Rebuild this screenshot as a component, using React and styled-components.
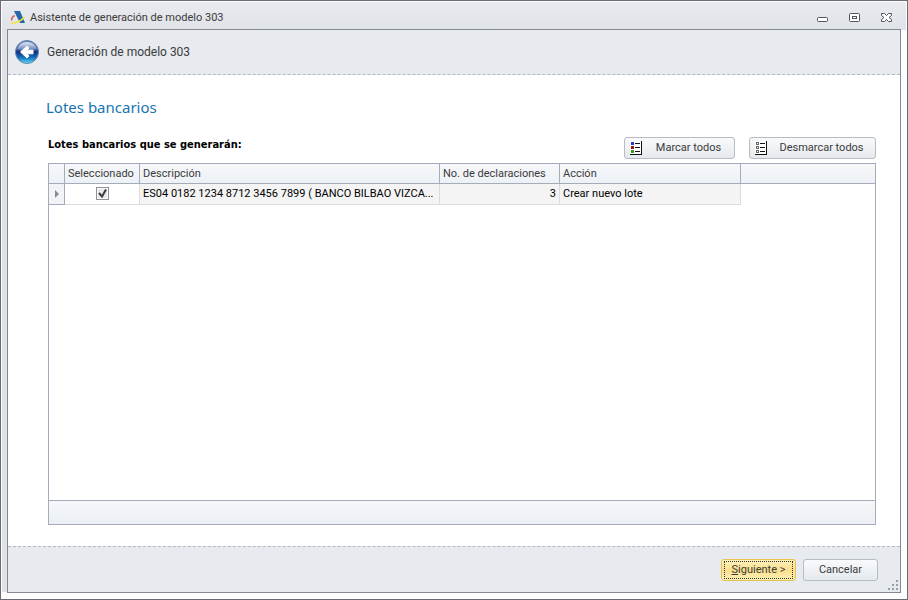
import React, { useState } from 'react';
import styled, { createGlobalStyle } from 'styled-components';

const GlobalStyle = createGlobalStyle`
  *, *::before, *::after { box-sizing: border-box; }
  body {
    margin: 0;
    font: 11px/14px Roboto, "Noto Sans", sans-serif;
    color: #3b3b3b;
  }
  button, input { font: inherit; color: inherit; }
`;

const Window = styled.div`
  min-height: 100vh;
  display: flex;
  flex-direction: column;
  padding: 1px 6px 6px 1px;
  border: 1px solid #696c77;
  background:
    linear-gradient(#e9ebef, #dfe2e6) 1px 1px / calc(100% - 2px) 28px no-repeat,
    linear-gradient(#dfe2e6, #dfe2e6) 1px 29px / 5px calc(100% - 36px) no-repeat,
    #fdfdfd;
`;

const TitleBar = styled.header`
  display: flex;
  align-items: center;
  height: 27px;
  padding: 4px 8px 0 8px;
`;

const Title = styled.h1`
  flex: 1;
  margin: 0 0 0 4px;
  font-size: 11px;
  font-weight: 400;
`;

const Controls = styled.div`
  display: flex;
  gap: 19px;
`;

const ControlButton = styled.button`
  display: grid;
  place-items: center;
  width: 13px;
  height: 13px;
  padding: 0;
  border: 0;
  background: none;
`;

const Client = styled.main`
  flex: 1;
  display: flex;
  flex-direction: column;
  margin-left: 5px;
  border: 1px solid #858990;
  background: #fff;
`;

const StepBar = styled.div`
  display: flex;
  align-items: center;
  gap: 7px;
  height: 45px;
  padding: 0 6px;
  border-bottom: 1px dashed #b4b7c6;
  background: #e7eaef;
`;

const BackButton = styled.button`
  display: flex;
  padding: 0;
  border: 0;
  background: none;
`;

const StepTitle = styled.span`
  font-size: 12px;
`;

const Content = styled.section`
  flex: 1;
  display: flex;
  flex-direction: column;
  padding: 22px 24px 21px 40px;
`;

const Heading = styled.h2`
  margin: 0 0 0 -2px;
  font-family: "Noto Sans", sans-serif;
  font-size: 15px;
  line-height: 20px;
  font-weight: 400;
  color: #1674b1;
`;

const Toolbar = styled.div`
  display: flex;
  gap: 14px;
  height: 46px;
  padding-top: 20px;
`;

const Caption = styled.h3`
  flex: 1;
  margin: 0;
  font-family: "DejaVu Sans Condensed", sans-serif;
  font-size: 11px;
  line-height: 16px;
  font-weight: 700;
  color: #000;
`;

const Button = styled.button`
  display: flex;
  align-items: center;
  justify-content: center;
  width: ${(p) => p.$width}px;
  height: 22px;
  padding: 0 1px;
  border: 1px solid ${(p) => (p.$primary ? '#e9c34c' : '#b7bbc3')};
  border-radius: 3px;
  background: ${(p) =>
    p.$primary
      ? 'linear-gradient(#fdf1bd, #fbe08c 50%, #fcefb4)'
      : 'linear-gradient(#f8fafc, #eff2f5 50%, #e5e9ed)'};
  line-height: 16px;
`;

const FocusMark = styled.span`
  flex: 1;
  height: 18px;
  margin: 0 1px;
  border: 1px dotted #333;
`;

const ButtonIcon = styled.svg`
  flex: none;
  margin-left: 4px;
`;

const ButtonText = styled.span`
  flex: 1;
`;

const GridPanel = styled.div`
  flex: 1;
  display: flex;
  flex-direction: column;
  border: 1px solid #a4abb9;
`;

const Table = styled.table`
  width: 100%;
  table-layout: fixed;
  border-collapse: separate;
  border-spacing: 0;
`;

const Col = styled.col`
  width: ${(p) => (p.$width ? `${p.$width}px` : 'auto')};
`;

const HeadCell = styled.th`
  height: 20px;
  padding: 0 3px;
  border: solid #a4abb9;
  border-width: 0 1px 1px 0;
  background: linear-gradient(#f6f7fa, #edf1f5);
  font-weight: 400;
  text-align: left;
  white-space: nowrap;
  &:last-child { border-right: 0; }
`;

const Cell = styled.td`
  height: 21px;
  padding: 0 3px;
  border: solid #dcdcde;
  border-width: 0 1px 1px 0;
  background: ${(p) => (p.$plain ? '#fff' : '#f4f4f4')};
  color: #000;
  text-align: ${(p) => p.$align || 'left'};
  white-space: nowrap;
`;

const IndicatorCell = styled(Cell)`
  padding: 0 5px;
  border-color: #a4abb9;
  background: #f1f3f6;
`;

const EmptyCell = styled.td``;

const CheckLabel = styled.label`
  display: grid;
  justify-content: center;
  padding-bottom: 1px;
  > * { grid-area: 1 / 1; }
`;

const CheckInput = styled.input`
  appearance: none;
  width: 13px;
  height: 13px;
  margin: 0;
  border: 1px solid #8d9098;
  background: #e6e8eb;
  box-shadow: inset 0 0 0 1px #fafafa;
  & + svg { visibility: hidden; pointer-events: none; }
  &:checked + svg { visibility: visible; }
`;

const Glyph = styled.svg`
  display: block;
`;

const GridFooter = styled.div`
  height: 24px;
  margin-top: auto;
  border-top: 1px solid #a4abb9;
  background: linear-gradient(#f5f7fa, #ebeff3);
`;

const ActionBar = styled.footer`
  display: flex;
  align-items: flex-end;
  justify-content: flex-end;
  gap: 7px;
  height: 46px;
  padding-bottom: 11px;
  border-top: 1px dashed #b4b7c6;
  background: #e7eaef;
`;

const Grip = styled.svg`
  margin: 0 1px -10px 3px;
`;

function AppLogo() {
  return (
    <Glyph width="16" height="16" viewBox="0 0 16 16" aria-hidden="true">
      <path d="M4 1h6l5 12h-5z" fill="#2467a8" />
      <path d="M4.500 5.500C2.500 6.500 1.500 8 1.500 10.500" fill="none" stroke="#d4605c" strokeWidth="1.400" />
      <path d="M1 13C7 13.500 11 11 14.500 7" fill="none" stroke="#f4e53a" strokeWidth="1.600" />
    </Glyph>
  );
}

function BackIcon() {
  return (
    <Glyph width="26" height="26" viewBox="0 0 26 26" aria-hidden="true">
      <defs>
        <linearGradient id="orb" x1="0" y1="0" x2="0" y2="1">
          <stop offset="0" stopColor="#6288c4" />
          <stop offset=".4" stopColor="#36589e" />
          <stop offset=".5" stopColor="#0c2e80" />
          <stop offset=".75" stopColor="#1673c4" />
          <stop offset="1" stopColor="#62e0f8" />
        </linearGradient>
        <linearGradient id="shine" x1="0" y1="0" x2="0" y2="1">
          <stop offset="0" stopColor="#fff" stopOpacity=".8" />
          <stop offset="1" stopColor="#fff" stopOpacity=".1" />
        </linearGradient>
      </defs>
      <circle cx="13" cy="13" r="11.500" fill="url(#orb)" stroke="#6f83a8" />
      <path d="M3 10a10.500 10 0 0 1 20 0q-10 5-20 0z" fill="url(#shine)" />
      <path
        d="M6.500 13l6.500-6 2 2-2 2.200h6v3.600h-6l2 2.200-2 2z"
        fill="#fff"
        stroke="#fff"
        strokeLinejoin="round"
      />
    </Glyph>
  );
}

function ListIcon({ colors }) {
  return (
    <ButtonIcon width="14" height="14" viewBox="0 0 14 14" shapeRendering="crispEdges" aria-hidden="true">
      <path d="M0 0h11v13H0z" fill="#fff" />
      <path d="M11.500 0v14M0 13.500h12M5 2.500h5M5 6.500h5M5 10.500h5" fill="none" stroke="#111" />
      {[1, 5, 9].map((y, i) =>
        colors ? (
          <rect key={y} x="1" y={y} width="3" height="3" fill={colors[i]} />
        ) : (
          <rect key={y} x="1.500" y={y + 0.5} width="2" height="2" fill="#fff" stroke="#666" />
        )
      )}
    </ButtonIcon>
  );
}

const rows = [
  {
    description: 'ES04 0182 1234 8712 3456 7899 ( BANCO BILBAO VIZCA...',
    count: 3,
    action: 'Crear nuevo lote',
  },
];

export default function App() {
  const [checked, setChecked] = useState(rows.map(() => true));
  const markAll = (value) => setChecked(rows.map(() => value));
  const toggle = (index) => setChecked(checked.map((v, i) => (i === index ? !v : v)));

  return (
    <>
      <GlobalStyle />
      <Window>
        <TitleBar>
          <AppLogo />
          <Title>Asistente de generación de modelo 303</Title>
          <Controls>
            <ControlButton aria-label="Minimizar">
              <Glyph width="13" height="13" viewBox="0 0 13 13">
                <rect x="1.500" y="6.500" width="10" height="4" rx="1" fill="#fff" stroke="#50545c" />
              </Glyph>
            </ControlButton>
            <ControlButton aria-label="Maximizar">
              <Glyph width="13" height="13" viewBox="0 0 13 13">
                <rect x="1.500" y="2.500" width="10" height="8" rx="1" fill="#fff" stroke="#50545c" />
                <rect x="4.500" y="5.500" width="4" height="2" fill="#fff" stroke="#50545c" />
              </Glyph>
            </ControlButton>
            <ControlButton aria-label="Cerrar">
              <Glyph width="13" height="13" viewBox="0 0 13 13">
                <path
                  d="M1.500 2.500h3l2 2 2-2h3v2l-2.500 2 2.500 2v2h-3l-2-2-2 2h-3v-2l2.500-2-2.500-2z"
                  fill="#fff"
                  stroke="#50545c"
                />
              </Glyph>
            </ControlButton>
          </Controls>
        </TitleBar>

        <Client>
          <StepBar>
            <BackButton aria-label="Atrás">
              <BackIcon />
            </BackButton>
            <StepTitle>Generación de modelo 303</StepTitle>
          </StepBar>

          <Content>
            <Heading>Lotes bancarios</Heading>
            <Toolbar>
              <Caption>Lotes bancarios que se generarán:</Caption>
              <Button $width={111} onClick={() => markAll(true)}>
                <ListIcon colors={['#2b35c8', '#a01010', '#3b9a10']} />
                <ButtonText>Marcar todos</ButtonText>
              </Button>
              <Button $width={127} onClick={() => markAll(false)}>
                <ListIcon />
                <ButtonText>Desmarcar todos</ButtonText>
              </Button>
            </Toolbar>
            <GridPanel>
              <Table>
                <colgroup>
                  <Col $width={16} />
                  <Col $width={75} />
                  <Col $width={300} />
                  <Col $width={120} />
                  <Col $width={181} />
                  <Col />
                </colgroup>
                <thead>
                  <tr>
                    <HeadCell />
                    <HeadCell>Seleccionado</HeadCell>
                    <HeadCell>Descripción</HeadCell>
                    <HeadCell>No. de declaraciones</HeadCell>
                    <HeadCell>Acción</HeadCell>
                    <HeadCell />
                  </tr>
                </thead>
                <tbody>
                  {rows.map((row, i) => (
                    <tr key={row.description}>
                      <IndicatorCell>
                        <Glyph width="5" height="8" viewBox="0 0 5 8">
                          <path d="M1 0l4 4-4 4z" fill="#858b98" />
                        </Glyph>
                      </IndicatorCell>
                      <Cell $plain>
                        <CheckLabel>
                          <CheckInput
                            type="checkbox"
                            aria-label="Seleccionado"
                            checked={checked[i]}
                            onChange={() => toggle(i)}
                          />
                          <Glyph width="13" height="13" viewBox="0 0 13 13">
                            <path d="M3 6l3 3.500 4-7" fill="none" stroke="#3c3c3c" strokeWidth="2" />
                          </Glyph>
                        </CheckLabel>
                      </Cell>
                      <Cell>{row.description}</Cell>
                      <Cell $align="right">{row.count}</Cell>
                      <Cell>{row.action}</Cell>
                      <EmptyCell />
                    </tr>
                  ))}
                </tbody>
              </Table>
              <GridFooter />
            </GridPanel>
          </Content>

          <ActionBar>
            <Button $width={75} $primary>
              <FocusMark>
                <u>S</u>iguiente &gt;
              </FocusMark>
            </Button>
            <Button $width={75}>Cancelar</Button>
            <Grip width="11" height="11" viewBox="0 0 11 11" aria-hidden="true">
              <path d="M8 0h2v2h-2zM4 4h2v2h-2zM8 4h2v2h-2zM0 8h2v2h-2zM4 8h2v2h-2zM8 8h2v2h-2z" fill="#9a9eaa" />
            </Grip>
          </ActionBar>
        </Client>
      </Window>
    </>
  );
}
